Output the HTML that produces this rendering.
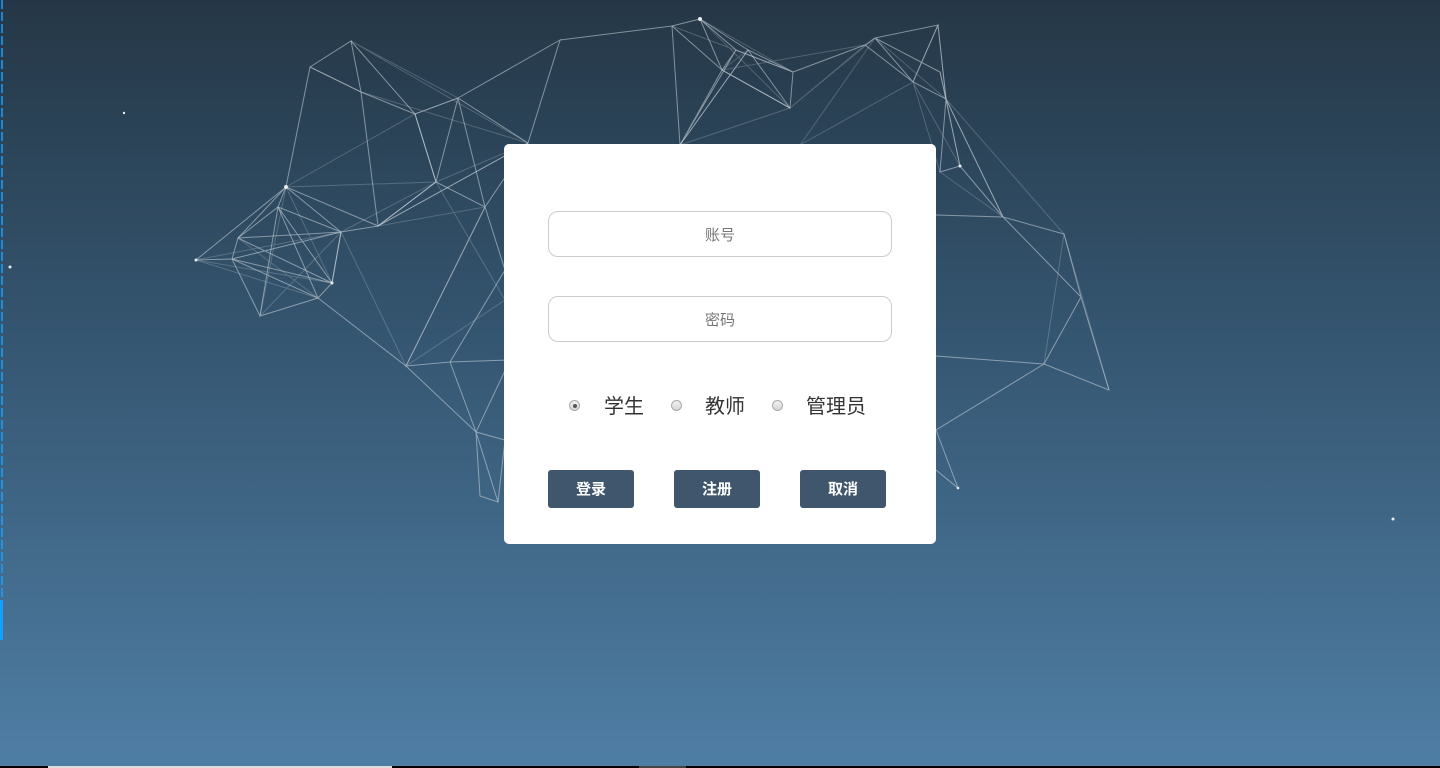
<!DOCTYPE html>
<html><head><meta charset="utf-8"><style>
html,body{margin:0;padding:0}
body{width:1440px;height:768px;overflow:hidden;position:relative;background:linear-gradient(#253746 0%,#33536d 40%,#4f7ea5 100%);font-family:"Liberation Sans","Noto Sans CJK SC",sans-serif}
svg.net{position:absolute;left:0;top:0}
.card{position:absolute;left:504px;top:144px;width:432px;height:400px;background:#fff;border-radius:5px}
.inp{position:absolute;left:44px;width:342px;height:44px;border:1px solid #ccc;border-radius:10px;text-align:center;line-height:47px;font-size:15px;color:#777}
.radios{position:absolute;top:251px;left:0;width:432px;font-size:20px;color:#333}
.r{position:absolute;top:5px;width:11px;height:11px;border-radius:50%;border:1px solid #aaa;background:linear-gradient(#f2f2f2,#d6d6d6);box-sizing:border-box}
.r.on::after{content:"";position:absolute;left:2.5px;top:2.5px;width:4px;height:4px;border-radius:50%;background:#555}
.lb{position:absolute;top:0;line-height:24px}
.btn{position:absolute;top:326px;width:86px;height:38px;background:#3f566d;color:#fff;border-radius:3px;text-align:center;line-height:40px;font-size:15px;font-weight:bold}
.bot{position:absolute;left:0;top:766px;width:1440px;height:2px;background:#000}
</style></head><body>
<svg class="net" width="1440" height="768" stroke="#cfd8e0" stroke-width="1" fill="none" stroke-opacity="0.55">
<polyline points="310,67 351,41 361,92 415,114 458,98 528,143 485,207 436,182 415,114 361,92 310,67 286,187 378,226 436,182 458,98 485,207 406,366"/>
<polyline points="351,41 415,114 436,182 378,226 341,232 286,187 278,207 341,232 332,283 318,298 260,316 232,259 196,260 286,187 238,238 232,259 318,298 278,207 260,316"/>
<polyline points="238,238 341,232 332,283 278,207 238,238 332,283 232,259 341,232"/>
<polyline points="361,92 378,226 528,143 560,40 458,98"/>
<polyline points="318,298 406,366 450,362 476,432 480,496 498,502 476,432 406,366"/>
<polyline points="450,362 510,360 476,432 505,440 498,502"/>
<polyline points="485,207 505,270 450,362"/>
<polyline points="560,40 672,26 700,19 722,70 736,50 700,19 748,50 793,72 790,108 722,70 680,145 736,50 793,72 865,45 875,38 938,25 913,82 875,38 940,72 946,99 913,82 865,45 793,72"/>
<polyline points="672,26 722,70 790,108 748,50 680,145 672,26"/>
<polyline points="938,25 946,99 960,166 940,172 946,99 1003,217 960,166"/>
<polyline points="1003,217 1064,234 1081,297 1044,364 1109,390 1081,297 1003,217 936,215"/>
<polyline points="1044,364 936,430 958,488 936,470"/>
<polyline points="1044,364 936,356"/>
</svg>
<svg class="net" width="1440" height="768" stroke="#cfd8e0" stroke-width="1" fill="none" stroke-opacity="0.25">
<polyline points="286,187 436,182 528,143 378,226 485,207 406,366 505,300 436,182 341,232 406,366"/>
<polyline points="196,260 341,232 260,316 286,187 332,283 196,260 318,298 238,238"/>
<polyline points="310,67 361,92 528,143 351,41 458,98 415,114 286,187"/>
<polyline points="672,26 793,72 700,19 790,108 680,145 748,50 722,70 865,45 790,108 875,38 800,145 913,82 938,25 946,99 875,38"/>
<polyline points="940,72 960,166 913,82 940,172 1003,217 946,99 1064,234"/>
<polyline points="1044,364 1064,234 1109,390"/>
</svg>
<svg class="net" width="1440" height="768" fill="#e6ecf0">
<circle cx="124" cy="113" r="1.2"/><circle cx="10" cy="267" r="1.5"/><circle cx="1393" cy="519" r="1.5"/>
<circle cx="286" cy="187" r="2"/><circle cx="196" cy="260" r="1.5"/><circle cx="332" cy="283" r="1.5"/><circle cx="700" cy="19" r="2"/><circle cx="960" cy="166" r="1.5"/><circle cx="958" cy="488" r="1.3"/>
</svg>
<svg class="net" width="6" height="640"><line x1="2" y1="0" x2="2" y2="600" stroke="#1a9fff" stroke-width="1.5" stroke-dasharray="9,3"/><rect x="0" y="600" width="3" height="40" fill="#10a0ff"/></svg>
<div class="card">
<div class="inp" style="top:67px">账号</div>
<div class="inp" style="top:152px">密码</div>
<div class="radios">
<span class="r on" style="left:65px"></span><span class="lb" style="left:100px">学生</span>
<span class="r" style="left:167px"></span><span class="lb" style="left:201px">教师</span>
<span class="r" style="left:268px"></span><span class="lb" style="left:302px">管理员</span>
</div>
<div class="btn" style="left:44px">登录</div>
<div class="btn" style="left:170px">注册</div>
<div class="btn" style="left:296px">取消</div>
</div>
<div class="bot"><div style="position:absolute;left:48px;width:344px;height:2px;background:#ddd"></div><div style="position:absolute;left:639px;width:47px;height:2px;background:#444"></div></div>
</body></html>
